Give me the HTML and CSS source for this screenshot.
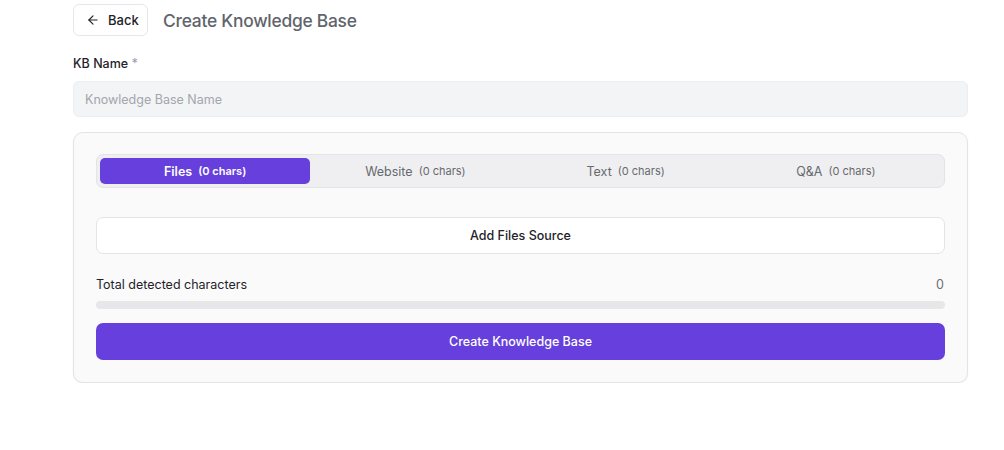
FILE: index.html
```html
<!DOCTYPE html>
<html>
<head>
<meta charset="utf-8">
<link rel="stylesheet" href="styles.css">
</head>
<body>
<div class="page">
  <header class="top">
    <button class="back">
      <svg width="14" height="14" viewBox="0 0 24 24" fill="none" stroke="currentColor" stroke-width="2" stroke-linecap="round" stroke-linejoin="round"><path d="M19 12H5"/><path d="M12 19l-7-7 7-7"/></svg>
      <span>Back</span>
    </button>
    <h1 class="title">Create Knowledge Base</h1>
  </header>
  <label class="label">KB Name <span class="req">*</span></label>
  <div class="input">Knowledge Base Name</div>
  <section class="card">
    <div class="tabs">
      <div class="tab active">Files <small>(0 chars)</small></div>
      <div class="tab">Website <small>(0 chars)</small></div>
      <div class="tab">Text <small>(0 chars)</small></div>
      <div class="tab">Q&amp;A <small>(0 chars)</small></div>
    </div>
    <button class="add">Add Files Source</button>
    <div class="total">
      <span>Total detected characters</span>
      <span class="count">0</span>
    </div>
    <div class="bar"></div>
    <button class="create">Create Knowledge Base</button>
  </section>
</div>
</body>
</html>
```
FILE: styles.css
```css
* { box-sizing: border-box; }
body {
  margin: 0;
  background: #ffffff;
  font-family: Inter, "Liberation Sans", sans-serif;
  color: #1f2328;
}
.page {
  width: 895px;
  margin-left: 73px;
  padding-top: 4px;
  display: flex;
  flex-direction: column;
}
.top {
  display: flex;
  align-items: center;
  gap: 15px;
  height: 32px;
}
.back {
  display: flex;
  align-items: center;
  gap: 8px;
  height: 32px;
  width: 75px;
  padding: 0 0 0 12px;
  background: #fff;
  border: 1px solid #e5e7eb;
  border-radius: 6px;
  font: 500 13px Inter, "Liberation Sans", sans-serif;
  color: #1f2328;
}
.title {
  margin: 0;
  font-size: 17.4px;
  font-weight: 500;
  color: #61646b;
  letter-spacing: -0.25px;
}
.label {
  margin-top: 20px;
  font-size: 12.5px;
  font-weight: 500;
  color: #1f2328;
  height: 16px;
}
.req { color: #9ca3af; }
.input {
  margin-top: 9px;
  height: 36px;
  background: #f3f4f6;
  border: 1px solid #eceef1;
  border-radius: 6px;
  padding: 0 11px;
  display: flex;
  align-items: center;
  font-size: 12.5px;
  color: #a2a6ad;
}
.card {
  margin-top: 15px;
  background: #fafafa;
  border: 1px solid #e4e4e7;
  border-radius: 10px;
  box-shadow: 0 1px 2px rgba(0,0,0,0.06);
  padding: 21px 22px 22px;
  display: flex;
  flex-direction: column;
}
.tabs {
  display: grid;
  grid-template-columns: repeat(4, 1fr);
  padding: 3px;
  height: 34px;
  background: #efeff1;
  border: 1px solid #e4e4e7;
  border-radius: 7px;
}
.tab {
  display: flex;
  align-items: center;
  justify-content: center;
  gap: 6px;
  font-size: 12.5px;
  font-weight: 400;
  color: #66696f;
  border-radius: 5px;
}
.tab small { font-size: 11px; font-weight: 400; }
.tab.active {
  background: #663fdc;
  color: #fff;
  font-weight: 600;
}
.tab.active small { font-weight: 600; }
.add {
  margin-top: 29px;
  height: 37px;
  background: #fff;
  border: 1px solid #e4e4e7;
  border-radius: 7px;
  font: 500 12.5px Inter, "Liberation Sans", sans-serif;
  color: #1f2328;
}
.total {
  margin-top: 23px;
  display: flex;
  justify-content: space-between;
  font-size: 12.5px;
  font-weight: 400;
  height: 16px;
}
.count { color: #6b6e75; font-weight: 400; padding-right: 1px; }
.bar {
  margin-top: 8px;
  height: 8px;
  background: #e7e7ea;
  border-radius: 4px;
}
.create {
  margin-top: 14px;
  height: 37px;
  background: #663fdc;
  border: none;
  border-radius: 7px;
  color: #fff;
  font: 500 12.5px Inter, "Liberation Sans", sans-serif;
}
```
